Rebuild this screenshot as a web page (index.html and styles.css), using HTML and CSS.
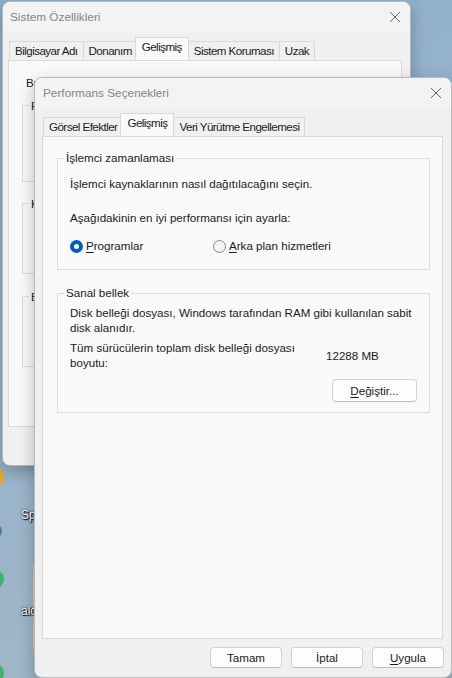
FILE: index.html
```html
<!DOCTYPE html>
<html lang="tr">
<head>
    <meta charset="UTF-8">
    <meta name="viewport" content="width=device-width, initial-scale=1.0">
    <title>Performans Seçenekleri</title>
    <link rel="stylesheet" href="styles.css">
</head>
<body>
<div class="desktop">
    <!-- desktop shortcuts peeking out on the left -->
    <span class="shortcut sc-yellow"></span>
    <span class="shortcut sc-blue"></span>
    <span class="shortcut sc-green"></span>
    <span class="shortcut sc-green2"></span>
    <span class="shortcut sc-folder"></span>
    <span class="desk-label lbl-1">Spotify</span>
    <span class="desk-label lbl-2">alcohol</span>

    <section class="window sysprops">
        <header class="titlebar">
            <span class="title">Sistem Özellikleri</span>
            <svg class="close" width="12" height="12" viewBox="0 0 12 12"><path d="M1 1 L11 11 M11 1 L1 11" stroke="#666" stroke-width="1" fill="none"/></svg>
        </header>
        <nav class="tabs">
            <span class="tab">Bilgisayar Adı</span>
            <span class="tab">Donanım</span>
            <span class="tab active">Gelişmiş</span>
            <span class="tab">Sistem Koruması</span>
            <span class="tab">Uzak</span>
        </nav>
        <div class="panel sys-panel">
            <p class="notice">Bu değişikliklerin çoğunu yapmak için Yönetici olarak oturum açmanız gerekir.</p>
            <fieldset class="group g-perf">
                <legend>Performans</legend>
                <p>Görsel efektler, işlemci zamanlaması, bellek kullanımı ve sanal bellek</p>
            </fieldset>
            <fieldset class="group g-prof">
                <legend>Kullanıcı Profilleri</legend>
                <p>Oturum açma işleminizle ilgili masaüstü ayarları</p>
            </fieldset>
            <fieldset class="group g-boot">
                <legend>Başlangıç ve Kurtarma</legend>
                <p>Sistem başlangıcı, sistem hatası ve hata ayıklama bilgileri</p>
            </fieldset>
        </div>
        <div class="buttons">
            <button class="btn">Tamam</button>
            <button class="btn">İptal</button>
            <button class="btn">Uygula</button>
        </div>
    </section>

    <section class="window perf">
        <header class="titlebar">
            <span class="title">Performans Seçenekleri</span>
            <svg class="close" width="12" height="12" viewBox="0 0 12 12"><path d="M1 1 L11 11 M11 1 L1 11" stroke="#666" stroke-width="1" fill="none"/></svg>
        </header>
        <nav class="tabs">
            <span class="tab">Görsel Efektler</span>
            <span class="tab active">Gelişmiş</span>
            <span class="tab">Veri Yürütme Engellemesi</span>
        </nav>
        <div class="panel perf-panel">
            <fieldset class="group cpu">
                <legend>İşlemci zamanlaması</legend>
                <p class="line first">İşlemci kaynaklarının nasıl dağıtılacağını seçin.</p>
                <p class="line second">Aşağıdakinin en iyi performansı için ayarla:</p>
                <div class="radios">
                    <label class="radio"><span class="dot on"></span><span><u>P</u>rogramlar</span></label>
                    <label class="radio"><span class="dot"></span><span><u>A</u>rka plan hizmetleri</span></label>
                </div>
            </fieldset>
            <fieldset class="group vmem">
                <legend>Sanal bellek</legend>
                <p class="desc">Disk belleği dosyası, Windows tarafından RAM gibi kullanılan sabit disk alanıdır.</p>
                <div class="size-row">
                    <span class="size-label">Tüm sürücülerin toplam disk belleği dosyası boyutu:</span>
                    <span class="size-value">12288 MB</span>
                </div>
                <div class="change-row">
                    <button class="btn wide"><u>D</u>eğiştir...</button>
                </div>
            </fieldset>
        </div>
        <div class="buttons">
            <button class="btn">Tamam</button>
            <button class="btn">İptal</button>
            <button class="btn"><u>U</u>ygula</button>
        </div>
    </section>
</div>
</body>
</html>
```

FILE: styles.css
```css
* {
    box-sizing: border-box;
}
body {
    margin: 0;
    width: 452px;
    height: 678px;
    overflow: hidden;
    font-family: "Liberation Sans", Arial, sans-serif;
    font-size: 11.6px;
    color: #1b1b1b;
}
p {
    margin: 0;
}
u {
    text-decoration-thickness: 1px;
    text-underline-offset: 2px;
}
.desktop {
    position: relative;
    width: 452px;
    height: 678px;
    background: linear-gradient(160deg, #8cafcf 0%, #97b3cb 45%, #a4b7c6 100%);
}

/* shortcuts on the desktop */
.shortcut {
    position: absolute;
    border-radius: 50%;
}
.sc-yellow {
    left: -14px;
    top: 466px;
    width: 18px;
    height: 22px;
    background: #e4a935;
}
.sc-blue {
    left: -4px;
    top: 526px;
    width: 6px;
    height: 10px;
    background: #56799a;
}
.sc-green {
    left: -12px;
    top: 570px;
    width: 16px;
    height: 18px;
    background: #3eb36a;
}
.sc-green2 {
    left: -12px;
    top: 664px;
    width: 16px;
    height: 18px;
    background: #3eb36a;
}
.sc-folder {
    left: 33px;
    top: 565px;
    width: 2px;
    height: 85px;
    border-radius: 1px;
    background: #d6c79e;
}
.desk-label {
    position: absolute;
    left: 21px;
    font-size: 12px;
    color: #fff;
    text-shadow: 0 0 2px #000, 1px 1px 1px #000;
}
.lbl-1 {
    top: 508px;
}
.lbl-2 {
    top: 604px;
}

/* windows */
.window {
    position: absolute;
    display: flex;
    flex-direction: column;
    background: #f0f0f0;
    border: 1px solid #b9b9b9;
    border-radius: 8px;
    box-shadow: 0 6px 16px rgba(0, 0, 0, 0.25);
    overflow: hidden;
}
.sysprops {
    left: 2px;
    top: 1px;
    width: 409px;
    height: 465px;
}
.perf {
    left: 34px;
    top: 77px;
    width: 418px;
    height: 601px;
}
.titlebar {
    display: flex;
    align-items: center;
    justify-content: space-between;
    height: 30px;
    padding: 0 9px 0 7px;
    background: #f3f3f3;
}
.title {
    color: #858585;
    font-size: 11.8px;
}
.perf .title {
    padding-left: 1px;
}

/* tab strip */
.tabs {
    display: flex;
    align-items: flex-end;
    height: 23px;
    margin-top: 5px;
    padding-left: 6px;
    position: relative;
    z-index: 1;
}
.perf .tabs {
    padding-left: 8px;
}
.tab {
    height: 19px;
    padding: 0 5px;
    line-height: 17px;
    letter-spacing: -0.55px;
    border: 1px solid #d9d9d9;
    border-bottom: none;
    margin-right: -1px;
    background: #f0f0f0;
    white-space: nowrap;
}
.tab.active {
    height: 23px;
    line-height: 18px;
    margin: 0 -1px 0 -2px;
    padding: 0 6px;
    background: #f9f9f9;
    position: relative;
    z-index: 2;
}
.panel {
    border: 1px solid #d9d9d9;
    background: #f9f9f9;
}
.sys-panel {
    height: 373px;
    margin: 0 8px 0 5px;
    padding: 14px 14px 0 13px;
}
.perf-panel {
    flex: 1;
    margin: 0 8px 0 7px;
    padding: 13px 12px 0 14px;
}

/* group boxes */
.group {
    margin: 0;
    padding: 0 12px;
    border: 1px solid #dcdcdc;
    min-width: 0;
}
.group legend {
    padding: 0 2px;
    margin-left: -6px;
    line-height: 16px;
}
.notice {
    line-height: 16px;
    margin-left: 4px;
    white-space: nowrap;
}
.g-perf {
    margin-top: 7px;
    height: 84px;
}
.g-prof {
    margin-top: 14px;
    height: 78px;
}
.g-boot {
    margin-top: 15px;
    height: 78px;
}
.g-perf p, .g-prof p, .g-boot p {
    margin-top: 5px;
    line-height: 16px;
}

.line {
    line-height: 16px;
}
.line.first {
    margin-top: 10px;
}
.line.second {
    margin-top: 18px;
}
.radios {
    display: flex;
    margin-top: 12px;
    padding-bottom: 15px;
}
.radio {
    display: flex;
    align-items: center;
    gap: 3px;
    line-height: 16px;
    width: 143px;
}
.dot {
    width: 13px;
    height: 13px;
    border-radius: 50%;
    border: 1px solid #878787;
    background: #f4f4f4;
    flex: none;
}
.dot.on {
    border: 4px solid #005fb8;
    background: #fff;
}

.vmem {
    margin-top: 15px;
}
.desc {
    margin-top: 4px;
    margin-right: -8px;
    line-height: 15px;
}
.size-row {
    display: flex;
    align-items: center;
    margin-top: 5px;
}
.size-label {
    width: 256px;
    line-height: 15px;
}
.size-value {
    line-height: 15px;
}
.change-row {
    display: flex;
    justify-content: flex-end;
    margin-top: 9px;
    padding-bottom: 10px;
}

/* push buttons */
.btn {
    font-family: inherit;
    font-size: 11.6px;
    color: #1b1b1b;
    width: 72px;
    height: 21px;
    padding: 0;
    background: #fdfdfd;
    border: 1px solid #d2d2d2;
    border-bottom-color: #bdbdbd;
    border-radius: 4px;
}
.btn.wide {
    width: 85px;
    height: 23px;
}
.buttons {
    display: flex;
    justify-content: flex-end;
    gap: 9px;
    padding: 8px 7px 9px;
}
```
